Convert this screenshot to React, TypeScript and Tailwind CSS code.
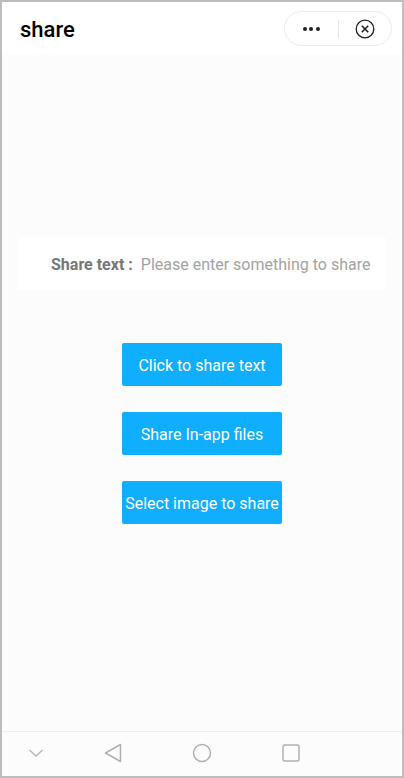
import type { ReactNode } from "react";

function ShareButton({ children }: { children: ReactNode }) {
  return (
    <button className="w-40 h-[43px] pt-[2px] bg-[#10aeff] text-white text-[16px] rounded-[2px] whitespace-nowrap flex items-center justify-center">
      {children}
    </button>
  );
}

export default function App() {
  return (
    <div className="w-[404px] h-[778px] flex flex-col border-2 border-[#bdbdbd] bg-[#fcfcfc] font-['Roboto',sans-serif] overflow-hidden">
      <header className="h-[53px] shrink-0 bg-white flex items-center justify-between pl-[18px] pr-[10px]">
        <h1 className="text-[22px] font-medium text-black leading-none mt-[2px]">share</h1>
        <div className="w-[108px] h-[35px] rounded-full border border-[#ececec] bg-white flex items-center">
          <div className="flex-1 flex items-center justify-center gap-[2.5px]">
            <span className="w-1 h-1 rounded-full bg-[#222]" />
            <span className="w-1 h-1 rounded-full bg-[#222]" />
            <span className="w-1 h-1 rounded-full bg-[#222]" />
          </div>
          <div className="w-px h-[18px] bg-[#e5e5e5]" />
          <div className="flex-1 flex items-center justify-center">
            <svg width="20" height="20" viewBox="0 0 20 20" fill="none" stroke="#222" strokeWidth="1.3">
              <circle cx="10" cy="10" r="8.8" />
              <path d="M6.8 6.8l6.4 6.4M13.2 6.8l-6.4 6.4" strokeWidth="1.6" />
            </svg>
          </div>
        </div>
      </header>

      <main className="flex-1 flex flex-col items-center">
        <div className="mt-[182px] mx-4 self-stretch h-[53px] pt-[2px] bg-white flex items-center pl-[33px] text-[16px]">
          <span className="font-bold text-[#777] whitespace-nowrap">Share text :</span>
          <span className="ml-[8px] text-[#a3a3a3] whitespace-nowrap">Please enter something to share</span>
        </div>
        <div className="mt-[53px] flex flex-col gap-[26px]">
          <ShareButton>Click to share text</ShareButton>
          <ShareButton>Share In-app files</ShareButton>
          <ShareButton>Select image to share</ShareButton>
        </div>
      </main>

      <footer className="h-[45px] shrink-0 border-t border-[#eeeeee] bg-[#fcfcfc] flex items-center pb-[2px]">
        <svg className="ml-[26px]" width="16" height="10" viewBox="0 0 16 10" fill="none" stroke="#b5b5b5" strokeWidth="1.3">
          <path d="M1.5 2l6.5 6 6.5-6" />
        </svg>
        <svg className="ml-[60px]" width="18" height="20" viewBox="0 0 18 20" fill="none" stroke="#b0b0b0" strokeWidth="1.5" strokeLinejoin="round">
          <path d="M16.5 1.5v17L1.5 10z" />
        </svg>
        <svg className="ml-[70px]" width="20" height="20" viewBox="0 0 20 20" fill="none" stroke="#b0b0b0" strokeWidth="1.5">
          <circle cx="10" cy="10" r="8.5" />
        </svg>
        <svg className="ml-[70px]" width="18" height="18" viewBox="0 0 18 18" fill="none" stroke="#b0b0b0" strokeWidth="1.5">
          <rect x="1" y="1" width="16" height="16" rx="1.5" />
        </svg>
      </footer>
    </div>
  );
}
